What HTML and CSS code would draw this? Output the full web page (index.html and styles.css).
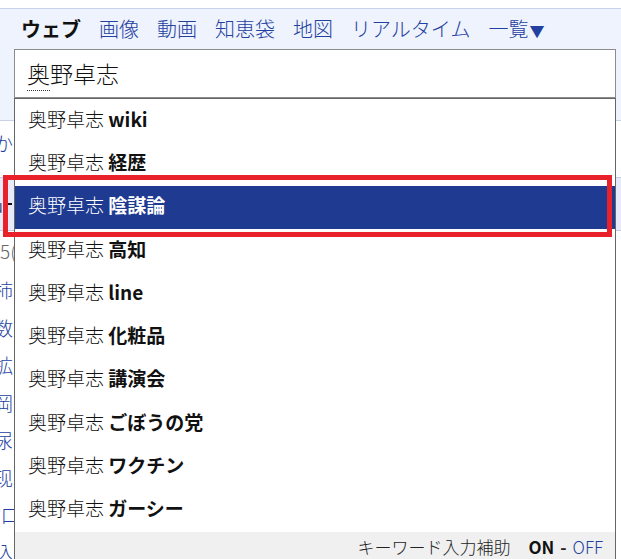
FILE: index.html
```html
<!doctype html>
<html>
<head>
	<meta charset="utf-8">
	<title>奥野卓志 - 検索</title>
	<link rel="stylesheet" href="styles.css">
</head>
<body>
<div class="page">
	<div class="header">
		<ul class="tabs">
			<li class="current">ウェブ</li>
			<li><a href="#">画像</a></li>
			<li><a href="#">動画</a></li>
			<li><a href="#">知恵袋</a></li>
			<li><a href="#">地図</a></li>
			<li><a href="#">リアルタイム</a></li>
			<li><a href="#">一覧<span class="caret">▼</span></a></li>
		</ul>
		<div class="search">
			<span class="query"><span class="ime">奥</span>野卓志</span>
		</div>
	</div>
	<div class="results">
		<p class="hint"><a href="#">からの検索結果を表示しています</a></p>
		<div class="band"><span class="band-text">u</span><span class="dash"></span></div>
		<p class="count">5(約 1,230,000件)</p>
		<ul class="links">
			<li><a href="#">柿</a></li>
			<li><a href="#">数</a></li>
			<li><a href="#">拡</a></li>
			<li><a href="#">岡</a></li>
			<li><a href="#">尿</a></li>
			<li><a href="#">现</a></li>
			<li><a href="#">°口</a></li>
			<li><a href="#">込</a></li>
		</ul>
	</div>
</div>

<div class="suggest">
	<ul class="suggest-list">
		<li>奥野卓志 <b>wiki</b></li>
		<li>奥野卓志 <b>経歴</b></li>
		<li class="active">奥野卓志 <b>陰謀論</b></li>
		<li>奥野卓志 <b>高知</b></li>
		<li>奥野卓志 <b>line</b></li>
		<li>奥野卓志 <b>化粧品</b></li>
		<li>奥野卓志 <b>講演会</b></li>
		<li>奥野卓志 <b>ごぼうの党</b></li>
		<li>奥野卓志 <b>ワクチン</b></li>
		<li>奥野卓志 <b>ガーシー</b></li>
	</ul>
	<div class="assist">
		<span class="assist-label">キーワード入力補助</span>
		<b>ON</b><span class="sep">-</span><a href="#">OFF</a>
	</div>
</div>
<div class="mark"></div>
</body>
</html>
```

FILE: styles.css
```css
* {
    margin: 0;
    padding: 0;
    box-sizing: border-box;
}

html, body {
    height: 100%;
    overflow: hidden;
}

body {
    font-family: "Noto Sans CJK JP", "Noto Sans", sans-serif;
    font-weight: 300;
    color: #111;
    background: #fff;
}

b {
    font-weight: bold;
}

a {
    color: #2340a0;
    text-decoration: none;
}

.page {
    padding-top: 8px;
}

.header {
    border-top: 1px solid #c5d3ec;
    border-bottom: 1px solid #c9d3e6;
    background: #eef3fd;
    padding: 0 5px 0 14px;
    height: 113px;
}

.tabs {
    display: flex;
    list-style: none;
    height: 40px;
    padding-bottom: 2px;
    align-items: center;
    padding-left: 7px;
    gap: 18px;
    font-size: 20px;
}

.tabs .current {
    font-weight: bold;
    color: #111;
}

.caret {
    font-size: 15px;
    margin-left: 1px;
}

.search {
    height: 49px;
    border: 1px solid #8c8c8c;
    background: #fff;
    display: flex;
    align-items: center;
    padding: 0 0 2px 12px;
    font-size: 23px;
}

.ime {
    border-bottom: 1px dotted #333;
}

.results {
    font-size: 19px;
}

.hint {
    height: 56px;
    padding-top: 10px;
    margin-left: -6px;
    line-height: 24px;
}

.band {
    height: 54px;
    background: #e7ebf9;
    border-top: 1px solid #c3cbe8;
    border-bottom: 1px solid #c3cbe8;
    display: flex;
    align-items: center;
    color: #1f2f6a;
}

.band-text {
    margin-left: -8px;
}

.dash {
    width: 9px;
    height: 2px;
    background: #111;
}

.count {
    color: #666;
    line-height: 40px;
}

.links {
    list-style: none;
    margin-left: -6px;
}

.links li {
    line-height: 37.5px;
}

.suggest {
    position: absolute;
    left: 14px;
    top: 98px;
    width: 602px;
    background: #fff;
    border: 1px solid #666;
    border-bottom: 0;
}

.suggest-list {
    list-style: none;
    font-size: 19px;
}

.suggest-list li {
    height: 43.3px;
    display: flex;
    align-items: center;
    padding: 0 0 5px 13px;
    white-space: pre;
}

.suggest-list li.active {
    background: #1f3b91;
    color: #fff;
}

.assist {
    height: 32px;
    background: #f0f0f0;
    display: flex;
    align-items: center;
    justify-content: flex-end;
    padding: 0 12px 3px 0;
    font-size: 17px;
    white-space: pre;
    color: #222;
}

.assist-label {
    margin-right: 18px;
}

.assist b {
    color: #111;
}

.sep {
    margin: 0 6px;
    font-weight: bold;
}

.mark {
    position: absolute;
    left: 3px;
    top: 175px;
    width: 609px;
    height: 62px;
    border: 5px solid #e8212a;
}
```
